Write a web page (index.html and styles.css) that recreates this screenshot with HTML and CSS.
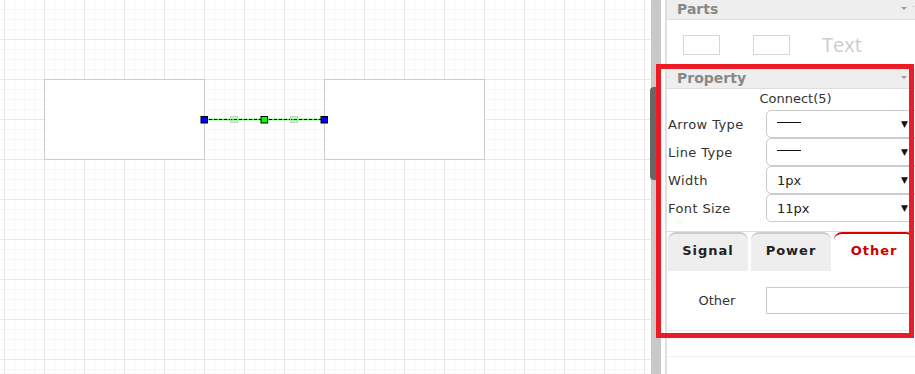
FILE: index.html
```html
<!DOCTYPE html>
<html lang="en">
<head>
    <meta charset="UTF-8">
    <meta name="viewport" content="width=device-width, initial-scale=1.0">
    <title>Diagram Editor</title>
    <link rel="stylesheet" href="styles.css">
</head>
<body>
    <div class="app">
        <div class="canvas">
            <svg class="diagram" width="651" height="374">
                <rect x="44.5" y="79.5" width="160" height="80" fill="#fff" stroke="#cccccc"/>
                <rect x="324.5" y="79.5" width="160" height="80" fill="#fff" stroke="#cccccc"/>
                <line x1="204" y1="119.5" x2="324" y2="119.5" stroke="#00ff00" stroke-width="1.5"/>
                <line x1="204" y1="119.5" x2="324" y2="119.5" stroke="#000" stroke-dasharray="3 2"/>
                <rect x="230.5" y="116.5" width="7" height="6" fill="rgba(0,255,0,0.2)" stroke="#c8c8c8"/>
                <rect x="290.5" y="116.5" width="7" height="6" fill="rgba(0,255,0,0.2)" stroke="#c8c8c8"/>
                <rect x="201" y="116.5" width="6.5" height="6.5" fill="#0000ff" stroke="#000"/>
                <rect x="261" y="116.5" width="6.5" height="6.5" fill="#00ff00" stroke="#000"/>
                <rect x="321" y="116.5" width="6.5" height="6.5" fill="#0000ff" stroke="#000"/>
            </svg>
        </div>

        <div class="splitter"><div class="thumb"></div></div>

        <div class="sidebar">
            <section class="panel">
                <div class="panel-head">Parts <span class="caret"></span><span class="dot"></span></div>
                <div class="parts-body">
                    <div class="part-box"></div>
                    <div class="part-box"></div>
                    <div class="part-text">Text</div>
                </div>
            </section>

            <section class="panel">
                <div class="panel-head">Property <span class="caret"></span><span class="dot"></span></div>
                <div class="prop-title">Connect(5)</div>
                <div class="prop-rows">
                    <div class="prop-row">
                        <label>Arrow Type</label>
                        <div class="select"><span class="dash"></span><span class="arrow">&#9660;</span></div>
                    </div>
                    <div class="prop-row">
                        <label>Line Type</label>
                        <div class="select"><span class="dash"></span><span class="arrow">&#9660;</span></div>
                    </div>
                    <div class="prop-row">
                        <label>Width</label>
                        <div class="select"><span>1px</span><span class="arrow">&#9660;</span></div>
                    </div>
                    <div class="prop-row">
                        <label>Font Size</label>
                        <div class="select"><span>11px</span><span class="arrow">&#9660;</span></div>
                    </div>
                </div>

                <div class="tabs">
                    <div class="tab">Signal</div>
                    <div class="tab">Power</div>
                    <div class="tab active">Other</div>
                </div>
                <div class="tab-pane">
                    <label>Other</label>
                    <input type="text" class="text-input">
                </div>
            </section>
            <div class="filler"></div>
        </div>

        <div class="highlight"></div>
    </div>
</body>
</html>
```

FILE: styles.css
```css
body {
    margin: 0;
    font-family: 'DejaVu Sans', Verdana, sans-serif;
    background-color: #ffffff;
    overflow: hidden;
}

.app {
    position: relative;
    display: flex;
    width: 915px;
    height: 374px;
}

.canvas {
    width: 651px;
    height: 374px;
    flex: none;
    background-color: #ffffff;
    background-image:
        linear-gradient(to right, #e8e8e8 1px, transparent 1px),
        linear-gradient(to bottom, #e8e8e8 1px, transparent 1px),
        linear-gradient(to right, #f7f7f7 1px, transparent 1px),
        linear-gradient(to bottom, #f7f7f7 1px, transparent 1px);
    background-size: 40px 40px, 40px 40px, 10px 10px, 10px 10px;
    background-position: 4px 39px;
}

.diagram {
    display: block;
}

.splitter {
    position: relative;
    width: 10px;
    flex: none;
    background-color: #c9c9c9;
}

.thumb {
    position: absolute;
    left: -1px;
    top: 87px;
    width: 7px;
    height: 93px;
    background-color: #666666;
    border-radius: 4px 0 0 4px;
}

.sidebar {
    flex: 1;
    margin-left: 4px;
    border-left: 2px solid #e0e0e0;
    display: flex;
    flex-direction: column;
}

.panel-head {
    position: relative;
    height: 19px;
    line-height: 19px;
    padding-left: 10px;
    background-color: #eeeeee;
    border-bottom: 1px solid #dddddd;
    color: #888888;
    font-size: 14px;
    font-weight: bold;
}

.caret {
    position: absolute;
    right: 17px;
    top: 7px;
    border-left: 3px solid transparent;
    border-right: 3px solid transparent;
    border-top: 3px solid #999999;
}

.dot {
    position: absolute;
    right: 10px;
    top: 6px;
    width: 1px;
    height: 1px;
    background-color: #aaaaaa;
}

.parts-body {
    height: 49px;
    display: flex;
    align-items: center;
    padding-left: 16px;
    gap: 33px;
}

.part-box {
    width: 35px;
    height: 18px;
    border: 1px solid #d6d6d6;
}

.part-text {
    color: #cccccc;
    font-family: 'Open Sans', sans-serif;
    font-size: 20px;
    margin-left: -1px;
}

.prop-title {
    height: 21px;
    line-height: 19px;
    text-align: center;
    font-size: 13px;
    color: #333333;
}

.prop-rows {
    display: flex;
    flex-direction: column;
    padding-bottom: 9px;
    border-bottom: 1px solid #dddddd;
}

.prop-row {
    display: flex;
    align-items: center;
    padding-left: 1px;
}

.prop-row label {
    width: 98px;
    font-size: 13px;
    letter-spacing: 0.4px;
    color: #333333;
}

.select {
    width: 146px;
    height: 26px;
    box-sizing: content-box;
    border: 1px solid #cccccc;
    border-radius: 5px;
    display: flex;
    align-items: center;
    justify-content: space-between;
    padding: 0 0 0 10px;
    font-size: 13px;
    color: #222222;
}

.dash {
    display: block;
    width: 24px;
    height: 1px;
    background-color: #111111;
    margin-top: -4px;
}

.arrow {
    font-size: 9px;
    color: #111111;
    margin-right: 15px;
}

.tabs {
    display: flex;
    gap: 3px;
    padding-left: 1px;
}

.tab {
    width: 80px;
    height: 37px;
    line-height: 34px;
    text-align: center;
    background-color: #eeeeee;
    border-top: 2px solid #cccccc;
    border-radius: 8px 8px 0 0;
    font-size: 13px;
    font-weight: bold;
    letter-spacing: 1px;
    color: #222222;
}

.tab.active {
    background-color: #ffffff;
    border-top-color: #dd0000;
    color: #cc0000;
}

.tab-pane {
    height: 59px;
    display: flex;
    align-items: center;
    padding-left: 1px;
    border-bottom: 1px solid #e6e6e6;
}

.tab-pane label {
    width: 98px;
    text-align: center;
    font-size: 13px;
    color: #333333;
}

.text-input {
    width: 146px;
    height: 25px;
    padding: 0;
    margin: 0;
    border: 1px solid #cccccc;
    border-radius: 0;
    box-sizing: content-box;
}

.filler {
    height: 25px;
    border-bottom: 1px solid #f0f0f0;
}

.highlight {
    position: absolute;
    left: 656px;
    top: 64px;
    width: 258px;
    height: 274px;
    box-sizing: border-box;
    border: 5px solid #ed1c24;
    pointer-events: none;
}
```
